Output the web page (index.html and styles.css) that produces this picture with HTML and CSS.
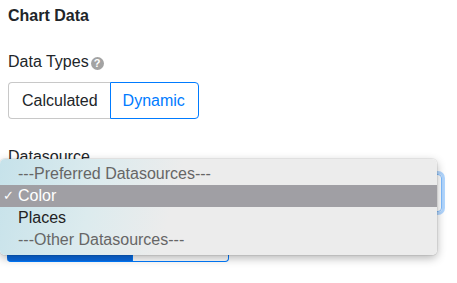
FILE: index.html
```html
<!DOCTYPE html>
<html>
<head>
    <title>Chart Data</title>
    <link rel="stylesheet" href="styles.css">
</head>
<body>

<div class="panel">
    <h4 class="panel-title">Chart Data</h4>

    <div class="field field-types">
        <div class="field-label">Data Types <span class="help">?</span></div>
        <div class="btn-group">
            <button class="btn">Calculated</button>
            <button class="btn active">Dynamic</button>
        </div>
    </div>

    <div class="field field-source">
        <div class="field-label">Datasource</div>
        <div class="select">
            <svg class="select-arrows" width="8" height="14" viewBox="0 0 8 14">
                <path d="M4 1 L7.5 6 H0.5 Z" fill="#333"/>
                <path d="M4 13 L7.5 8 H0.5 Z" fill="#333"/>
            </svg>
        </div>
    </div>

    <!-- covered by the popup; labels hidden behind it -->
    <div class="btn-group view-group">
        <div class="view-btn filled"></div>
        <div class="view-btn"></div>
    </div>
</div>

<!-- native select popup, open -->
<div class="menu">
    <div class="menu-item heading">---Preferred Datasources---</div>
    <div class="menu-item selected"><span class="check">&#10003;</span>Color</div>
    <div class="menu-item">Places</div>
    <div class="menu-item heading">---Other Datasources---</div>
</div>

</body>
</html>
```

FILE: styles.css
```css
body {
    font-family: 'Liberation Sans', Arial, sans-serif;
    font-size: 16px;
    line-height: 24px;
    color: #212529;
    background-color: #fff;
    margin: 0;
    padding: 0;
}

.panel {
    padding: 4px 15px 0 8px;
}

.panel-title {
    font-size: 16px;
    font-weight: bold;
    margin: 0;
}

.field-types {
    margin-top: 22px;
}

.field-label {
    display: flex;
    align-items: center;
}

.help {
    display: inline-flex;
    align-items: center;
    justify-content: center;
    width: 13px;
    height: 13px;
    margin-left: 2px;
    margin-top: 2px;
    border-radius: 50%;
    background-color: #a3a3a3;
    color: #fff;
    font-size: 11px;
    font-weight: bold;
    line-height: 13px;
}

.btn-group {
    display: flex;
    margin-top: 8px;
}

.btn {
    font-family: inherit;
    font-size: 16px;
    line-height: 23px;
    padding: 6px 12px 6px 13px;
    background-color: #fff;
    color: #212529;
    border: 1px solid #c8c8c8;
    margin: 0;
}

.btn:first-child {
    border-radius: 4px 0 0 4px;
    border-right: none;
}

.btn:last-child {
    border-radius: 0 4px 4px 0;
}

.btn.active {
    color: #007bff;
    border-color: #007bff;
    border-left: 1px solid #007bff;
    padding: 6px 13px 6px 12px;
}

.field-source {
    margin-top: 26px;
}

.select {
    display: flex;
    align-items: center;
    justify-content: flex-end;
    height: 36px;
    margin-top: 5px;
    padding: 0 6px 0 12px;
    border: 1px solid #80bdff;
    border-radius: 4px;
    box-shadow: 0 0 0 3px rgba(0, 123, 255, 0.3);
}

.view-group {
    width: 222px;
    height: 37px;
    margin-top: 13px;
    margin-left: -1px;
}

.view-btn {
    flex: 1;
    border: 1px solid #007bff;
    border-left: none;
    border-radius: 0 4px 4px 0;
}

.view-btn.filled {
    flex: 0 0 125px;
    background-color: #0a6ae0;
    border-radius: 4px 0 0 4px;
}

.menu {
    position: absolute;
    left: 0;
    top: 159px;
    width: 437px;
    padding: 4px 0;
    border-radius: 5px;
    background: linear-gradient(105deg, #c6e2ea 0%, #dcebee 22%, #ececec 40%, #ececec 100%);
    box-shadow: 0 3px 10px rgba(0, 0, 0, 0.3), 0 0 0 1px rgba(0, 0, 0, 0.06);
    font-family: 'Liberation Sans', Arial, sans-serif;
    font-size: 16px;
}

.menu-item {
    position: relative;
    height: 22px;
    line-height: 22px;
    padding-left: 18px;
    color: #222;
}

.menu-item.heading {
    color: #666;
}

.menu-item.selected {
    background-color: #a09fa4;
    color: #fff;
}

.check {
    position: absolute;
    left: 3px;
    font-size: 13px;
}
```
